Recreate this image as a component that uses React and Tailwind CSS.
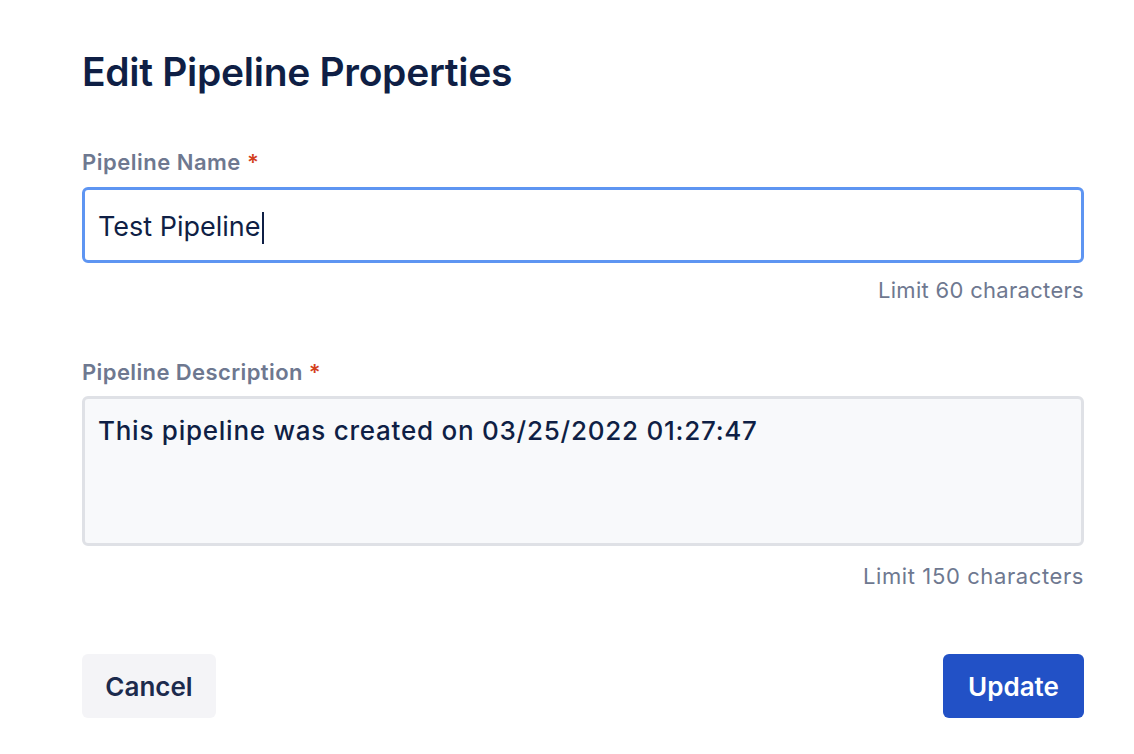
export default function App() {
  return (
    <div
      className="w-[1134px] h-[754px] bg-white pl-[82px] pr-[50px] pt-[48px]"
      style={{ fontFamily: 'Inter, "Noto Sans", sans-serif' }}
    >
      <h1 className="text-[39px] leading-[48px] font-semibold text-[#0f1f45] tracking-[-0.3px]">
        Edit Pipeline Properties
      </h1>

      {/* Name */}
      <div className="mt-[52px]">
        <label className="block text-[22px] leading-[28px] font-semibold text-[#6e7890] tracking-[0.5px]">
          Pipeline Name <span className="text-[#d3401d]">*</span>
        </label>
        <div className="mt-[11px] h-[76px] rounded-[6px] border-[3px] border-[#5e95f2] bg-white flex items-center px-[13px] pt-[5px]">
          <span className="text-[27px] text-[#0f1f45]">Test Pipeline</span>
          <span className="w-[2px] h-[32px] bg-[#0f1f45] ml-[1px]" />
        </div>
        <p className="mt-[13px] text-right text-[22px] leading-[28px] text-[#6e7890] tracking-[0.3px]">
          Limit 60 characters
        </p>
      </div>

      {/* Description */}
      <div className="mt-[54px]">
        <label className="block text-[22px] leading-[28px] font-semibold text-[#6e7890] tracking-[0.4px]">
          Pipeline Description <span className="text-[#d3401d]">*</span>
        </label>
        <div className="mt-[10px] h-[150px] rounded-[6px] border-[3px] border-[#dfe1e6] bg-[#f8f9fb] px-[13px] pt-[16px]">
          <span className="text-[26px] leading-[32px] font-medium text-[#0f1f45] tracking-[0.75px]">
            This pipeline was created on 03/25/2022 01:27:47
          </span>
        </div>
        <p className="mt-[16px] text-right text-[22px] leading-[28px] text-[#6e7890] tracking-[0.6px]">
          Limit 150 characters
        </p>
      </div>

      <div className="mt-[64px] flex justify-between">
        <button className="h-[64px] w-[134px] rounded-[6px] bg-[#f4f4f7] text-[26px] font-semibold text-[#1c2a4d]">
          Cancel
        </button>
        <button className="h-[64px] w-[141px] rounded-[6px] bg-[#2251c6] text-[26px] font-semibold text-white">
          Update
        </button>
      </div>
    </div>
  );
}
